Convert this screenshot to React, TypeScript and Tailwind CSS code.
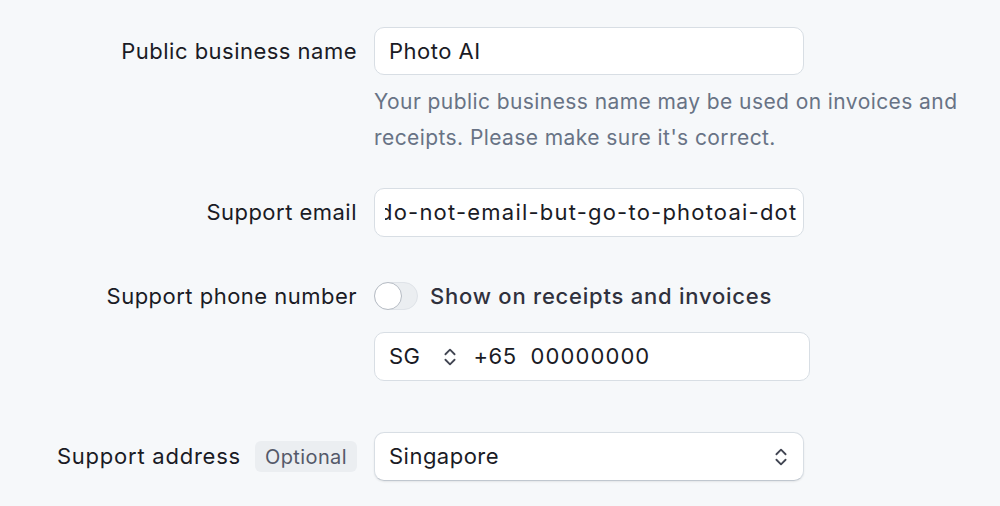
import React from 'react';

function Chevrons({ className }: { className?: string }) {
  return (
    <svg viewBox="0 0 16 24" fill="none" stroke="currentColor" strokeWidth="2" strokeLinecap="round" strokeLinejoin="round" className={className}>
      <path d="M3 9l5-5 5 5" />
      <path d="M3 15l5 5 5-5" />
    </svg>
  );
}

export default function App() {
  return (
    <div
      className="min-h-[506px] w-[1000px] bg-[#f6f8fa] text-[#30313d] pt-[27px] tracking-[0.03em]"
      style={{ fontFamily: 'Inter, "Noto Sans", sans-serif' }}
    >
      {/* Public business name */}
      <div className="flex">
        <div className="w-[357px] h-[48px] flex items-center justify-end text-[22px] text-[#1a1b25]">
          Public business name
        </div>
        <div className="ml-[17px] w-[430px]">
          <div className="h-[48px] rounded-[10px] border border-[#d8dee4] bg-white flex items-center px-[14px] text-[22px] text-[#1a1b25]">
            Photo AI
          </div>
          <p className="mt-[9px] w-[600px] text-[21px] leading-[36px] tracking-[0.02em] text-[#687385]">
            Your public business name may be used on invoices and receipts. Please make sure it's correct.
          </p>
        </div>
      </div>

      {/* Support email */}
      <div className="flex mt-[32px]">
        <div className="w-[357px] h-[49px] flex items-center justify-end text-[22px] text-[#1a1b25]">
          Support email
        </div>
        <div className="ml-[17px] w-[430px] h-[49px] rounded-[10px] border border-[#d8dee4] bg-white flex items-center pl-[10px] pr-[6px]">
          <div className="overflow-hidden whitespace-nowrap w-full text-[22px] tracking-[0.055em] text-[#1a1b25]">
            <span className="-ml-[6px] inline-block">do-not-email-but-go-to-photoai-dot-com</span>
          </div>
        </div>
      </div>

      {/* Support phone number */}
      <div className="flex mt-[45px]">
        <div className="w-[357px] h-[28px] flex items-center justify-end text-[22px] text-[#1a1b25]">
          Support phone number
        </div>
        <div className="ml-[17px] flex flex-col">
          <div className="flex items-center h-[28px]">
            <div className="relative w-[44px] h-[28px] rounded-full bg-[#ebeef1] border border-[#dfe3e8]">
              <div className="absolute -left-px -top-px w-[28px] h-[28px] rounded-full bg-white border border-[#b6bcc4]" />
            </div>
            <span className="ml-[12px] text-[22px] font-medium tracking-[0.035em] text-[#30313d]">Show on receipts and invoices</span>
          </div>
          <div className="mt-[22px] w-[436px] h-[49px] rounded-[10px] border border-[#d8dee4] bg-white flex items-center pl-[14px] text-[22px] text-[#1a1b25]">
            <span>SG</span>
            <Chevrons className="ml-[21px] w-[16px] h-[22px] text-[#414552]" />
            <span className="ml-[16px]">+65</span>
            <span className="ml-[14px] tracking-[0.05em]">00000000</span>
          </div>
        </div>
      </div>

      {/* Support address */}
      <div className="flex mt-[51px]">
        <div className="w-[357px] h-[49px] flex items-center justify-end">
          <span className="text-[22px] tracking-[0.035em] text-[#1a1b25]">Support address</span>
          <span className="ml-[14px] h-[31px] px-[10px] flex items-center rounded-[6px] bg-[#ebeef1] text-[20px] tracking-[0.02em] text-[#545969]">
            Optional
          </span>
        </div>
        <div className="ml-[17px] w-[430px] h-[49px] rounded-[10px] border border-[#d8dee4] border-b-[#c0c7cf] bg-white shadow-[0_1px_2px_rgba(0,0,0,0.08)] flex items-center justify-between pl-[14px] pr-[14px] text-[22px] text-[#1a1b25]">
          <span>Singapore</span>
          <Chevrons className="w-[16px] h-[22px] text-[#414552]" />
        </div>
      </div>
    </div>
  );
}
